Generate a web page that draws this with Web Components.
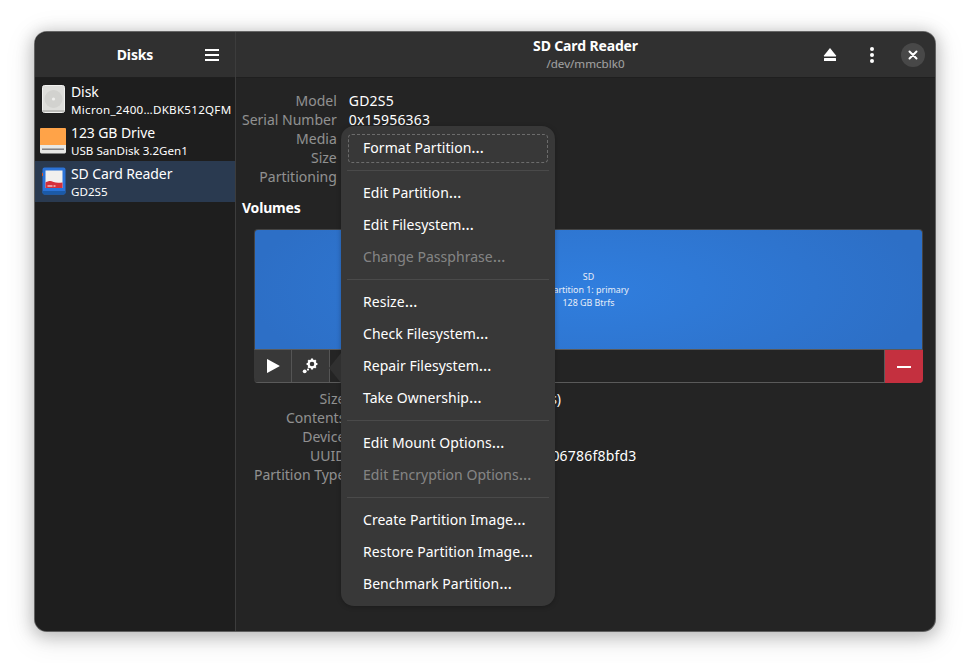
<!DOCTYPE html>
<html>
<head>
<meta charset="utf-8">
<title>Disks</title>
<style>
  html, body { margin: 0; background: #fff; }
  body { padding: 32px 35px; font-family: "Noto Sans", sans-serif; font-size: 14px; color: #fff; }
</style>
</head>
<body>
<disks-window>
  <disks-sidebar slot="sidebar">
    <drive-row name="Disk" detail="Micron_2400…DKBK512QFM" icon="disk" style="--detail-spacing: .27px"></drive-row>
    <drive-row name="123 GB Drive" detail="USB SanDisk 3.2Gen1" icon="usb"></drive-row>
    <drive-row name="SD Card Reader" detail="GD2S5" icon="sd" selected></drive-row>
  </disks-sidebar>
  <disks-header slot="header"></disks-header>
  <drive-details slot="main"></drive-details>
</disks-window>

<script>
const ICONS = {
  menu: `<svg width="16" height="16" viewBox="0 0 16 16" fill="#fff"><rect x="1" y="2" width="14" height="2"/><rect x="1" y="7" width="14" height="2"/><rect x="1" y="12" width="14" height="2"/></svg>`,
  eject: `<svg width="16" height="16" viewBox="0 0 16 16" fill="#fff"><path d="M8 1 14 8.500V9.500H2V8.500z"/><rect x="2" y="11" width="12" height="3" rx=".5"/></svg>`,
  kebab: `<svg width="16" height="16" viewBox="0 0 16 16" fill="#fff"><circle cx="8" cy="2" r="2"/><circle cx="8" cy="8" r="2"/><circle cx="8" cy="14" r="2"/></svg>`,
  close: `<svg width="12" height="12" viewBox="0 0 12 12" stroke="#fff" stroke-width="2" stroke-linecap="round"><path d="M2.500 2.500l7 7M9.500 2.500l-7 7"/></svg>`,
  play: `<svg width="16" height="16" viewBox="0 0 16 16" fill="#fff"><path d="M2 1.500v13a.4.4 0 0 0 .6.3L14.500 8.300a.4.4 0 0 0 0-.6L2.600 1.200a.4.4 0 0 0-.6.3z"/></svg>`,
  gear: `<svg width="17" height="16" viewBox="0 0 17 16"><g fill="none" stroke="#fff"><circle cx="10" cy="6" r="3.400" stroke-width="2.200"/><path stroke-width="2.100" d="M10 .6v2M10 9.400v2M4.600 6h2M13.400 6h2M6.200 2.200l1.400 1.400M12.400 8.400l1.400 1.400M13.800 2.200l-1.400 1.400M7.600 8.400 6.200 9.800"/></g><circle cx="2.700" cy="13.300" r="1.900" fill="#fff"/><circle cx="6" cy="11.600" r="1.100" fill="#fff"/></svg>`,
  minus: `<svg width="14" height="14" viewBox="0 0 14 14" fill="#fff"><rect y="6" width="14" height="2"/></svg>`,
  disk: `<svg width="24" height="28" viewBox="0 0 24 28"><rect x=".5" y=".5" width="22" height="27" rx="2" fill="#dededb"/><rect x=".5" y=".5" width="22" height="27" rx="2" fill="none" stroke="#f1f1ef"/><circle cx="11.500" cy="14" r="9" fill="#d2d2cf"/><circle cx="11.500" cy="14" r="1.600" fill="#efefed"/><path d="M1 26h21" stroke="#9a9a97"/></svg>`,
  usb: `<svg width="27" height="27" viewBox="0 0 27 27"><path d="M0 2a1 1 0 0 1 1-1h24a1 1 0 0 1 1 1v17H0z" fill="#ffa348"/><path d="M0 18h26v7a1.400 1.400 0 0 1-1.400 1.400H1.400A1.400 1.400 0 0 1 0 25z" fill="#e8e8e5"/><rect x="2" y="21.500" width="22" height="1.400" fill="#77767b"/></svg>`,
  sd: `<svg width="24" height="28" viewBox="0 0 24 28"><path d="M2.500.5h19a2 2 0 0 1 2 2v23a2 2 0 0 1-2 2h-19a2 2 0 0 1-2-2V9L0 8V6l.5-1V2.500a2 2 0 0 1 2-2z" fill="#2b73d8"/><path d="M.5 24h23v1.500a2 2 0 0 1-2 2h-19a2 2 0 0 1-2-2z" fill="#1b5aa8"/><rect x="3.500" y="3.500" width="17" height="17.500" fill="#f2f0ee"/><path d="M3.500 15.500c3-1.500 5-2 8-.5 3 1 6 .7 9 .4V21h-17z" fill="#d6303a"/><rect x="5.500" y="18.500" width="5" height="1" fill="#fff"/><rect x="11.500" y="18.500" width="2" height="1" fill="#fff"/><rect x="0" y="6" width="1" height="3" fill="#d6531f"/></svg>`
};

class DisksWindow extends HTMLElement {
  constructor() {
    super();
    this.attachShadow({ mode: 'open' });
    this.shadowRoot.innerHTML = `
      <style>
        :host {
          display: grid;
          grid-template-columns: 201px 1fr;
          grid-template-rows: 46px 553px;
          width: 900px;
          box-sizing: border-box;
          border-radius: 12px;
          background: #242424;
          overflow: hidden;
          box-shadow: 0 0 0 1px rgba(60,60,60,.75), 0 3px 16px 3px rgba(0,0,0,.22), 0 6px 28px 6px rgba(0,0,0,.08);
        }
        .side { grid-row: 1 / 3; border-right: 1px solid #3c3c3c; min-width: 0; }
      </style>
      <div class="side"><slot name="sidebar"></slot></div>
      <slot name="header"></slot>
      <slot name="main"></slot>
    `;
  }
}

class DisksSidebar extends HTMLElement {
  constructor() {
    super();
    this.attachShadow({ mode: 'open' });
    this.shadowRoot.innerHTML = `
      <style>
        :host { display: flex; flex-direction: column; height: 100%; background: #1e1e1e; }
        header {
          height: 46px; box-sizing: border-box; flex: none;
          background: #303030; border-bottom: 1px solid #1f1f1f;
          display: grid; grid-template-columns: 1fr auto 1fr; align-items: center;
          padding-right: 15px; padding-left: 15px;
        }
        h1 { margin: 0; font-size: 14px; font-weight: 700; grid-column: 2; letter-spacing: -.12px; }
        .menu { display: flex; justify-self: end; }
        .rows { padding-top: 1px; }
      </style>
      <header><h1>Disks</h1><span class="menu">${ICONS.menu}</span></header>
      <div class="rows"><slot></slot></div>
    `;
  }
}

class DriveRow extends HTMLElement {
  constructor() {
    super();
    this.attachShadow({ mode: 'open' });
  }
  connectedCallback() {
    this.shadowRoot.innerHTML = `
      <style>
        :host {
          display: flex; align-items: center; height: 41px; box-sizing: border-box;
          padding-left: 5px;
        }
        :host([selected]) { background: #2a3a50; }
        .icon { width: 27px; display: flex; justify-content: center; margin-right: 4px; flex: none; margin-top: -1px; }
        .name { font-size: 14px; line-height: 19px; letter-spacing: -.1px; }
        .detail { font-size: 11.6px; line-height: 17px; white-space: nowrap; letter-spacing: var(--detail-spacing, 0); }
      </style>
      <span class="icon">${ICONS[this.getAttribute('icon')]}</span>
      <div>
        <div class="name">${this.getAttribute('name')}</div>
        <div class="detail">${this.getAttribute('detail')}</div>
      </div>
    `;
  }
}

class DisksHeader extends HTMLElement {
  constructor() {
    super();
    this.attachShadow({ mode: 'open' });
    this.shadowRoot.innerHTML = `
      <style>
        :host {
          display: flex; align-items: center; justify-content: flex-end; position: relative;
          box-sizing: border-box; height: 46px; background: #303030; border-bottom: 1px solid #1f1f1f;
          padding-right: 10px;
        }
        .title { position: absolute; left: 0; right: 0; text-align: center; }
        .title b { display: block; font-size: 14px; line-height: 18px; letter-spacing: -.14px; }
        .title span { display: block; font-size: 11.6px; line-height: 17px; opacity: .55; }
        .btn { display: flex; position: relative; }
        .eject { margin-right: 26px; }
        .kebab { margin-right: 21px; }
        .close { width: 24px; height: 24px; border-radius: 50%; background: #484848; display: flex; align-items: center; justify-content: center; }
      </style>
      <div class="title"><b>SD Card Reader</b><span>/dev/mmcblk0</span></div>
      <span class="btn eject">${ICONS.eject}</span>
      <span class="btn kebab">${ICONS.kebab}</span>
      <span class="btn close">${ICONS.close}</span>
    `;
  }
}

class InfoGrid extends HTMLElement {
  constructor() {
    super();
    this.attachShadow({ mode: 'open' });
  }
  connectedCallback() {
    const rows = JSON.parse(this.getAttribute('rows'));
    this.shadowRoot.innerHTML = `
      <style>
        :host {
          display: grid; grid-template-columns: max-content 1fr; column-gap: 12px;
          line-height: 19px; font-size: 14px;
        }
        .k { text-align: right; color: rgba(255,255,255,.5); }
        .v { letter-spacing: .2px; white-space: nowrap; }
        .v.tight { letter-spacing: -.05px; }
      </style>
      ${rows.map(([k, v, cls]) => `<div class="k">${k}</div><div class="v ${cls || ''}">${v}</div>`).join('')}
    `;
  }
}

class VolumeMap extends HTMLElement {
  constructor() {
    super();
    this.attachShadow({ mode: 'open' });
    this.shadowRoot.innerHTML = `
      <style>
        :host { display: block; }
        .map {
          height: 121px; box-sizing: border-box; border: 1px solid #444; border-bottom: 1px solid #5a5a5a; border-radius: 4px 4px 0 0;
          background: radial-gradient(ellipse 340px 120px at center, #307ede, #2d6fc6);
          display: flex; align-items: center; justify-content: center; text-align: center;
          font-size: 8.9px; line-height: 13px; color: #e8eef8; padding-bottom: 1px;
        }
        .bar {
          display: flex; height: 33px; box-sizing: border-box;
          border-bottom: 1px solid #5a5a5a; border-radius: 0 0 4px 4px;
        }
        .tool {
          width: 37px; flex: none; background: #383838; border-right: 1px solid #555;
          display: flex; align-items: center; justify-content: center;
        }
        .tool:first-child { border-bottom-left-radius: 4px; }
        .space { flex: 1; border-right: 1px solid #5a5a5a; }
        .del {
          width: 38px; flex: none; background: #c4303f; margin-bottom: -1px; border-bottom-right-radius: 4px;
          display: flex; align-items: center; justify-content: center;
        }
      </style>
      <div class="map"><div>SD<br>Partition 1: primary<br>128 GB Btrfs</div></div>
      <div class="bar">
        <span class="tool">${ICONS.play}</span>
        <span class="tool">${ICONS.gear}</span>
        <span class="space"></span>
        <span class="del">${ICONS.minus}</span>
      </div>
    `;
  }
}

class MenuItem extends HTMLElement {
  constructor() {
    super();
    this.attachShadow({ mode: 'open' });
    this.shadowRoot.innerHTML = `
      <style>
        :host {
          display: block; height: 32px; line-height: 31px; box-sizing: border-box;
          padding: 0 15px; border-radius: 6px; position: relative; white-space: nowrap;
          letter-spacing: .04px;
        }
        :host([disabled]) { color: rgba(255,255,255,.4); }
        :host([focused])::after {
          content: ""; position: absolute; inset: 2px 0 1px 0;
          border: 1px dashed #6c6c6c; border-radius: 4px;
        }
        ::slotted(span) { font-size: 16px; line-height: 0; }
      </style>
      <slot></slot>
    `;
  }
}

class PartitionMenu extends HTMLElement {
  constructor() {
    super();
    this.attachShadow({ mode: 'open' });
    this.shadowRoot.innerHTML = `
      <style>
        :host {
          display: block; position: absolute; left: 105px; top: 48px; width: 214px;
          box-sizing: border-box; padding: 6px 7px;
          background: #383838; border-radius: 13px;
          box-shadow: 0 1px 5px rgba(0,0,0,.25);
        }
        .arrow {
          position: absolute; left: -12px; top: 227px; width: 0; height: 0;
          border-style: solid; border-width: 15px 12px 15px 0;
          border-color: transparent #303030 transparent transparent;
        }
        ::slotted(hr) { border: 0; height: 1px; background: #4a4a4a; margin: 6px -1px; }
      </style>
      <div class="arrow"></div>
      <slot></slot>
    `;
  }
}

class DriveDetails extends HTMLElement {
  constructor() {
    super();
    this.attachShadow({ mode: 'open' });
    const driveRows = [['Model', 'GD2S5'], ['Serial Number', '0x15956363'], ['Media', ''], ['Size', ''], ['Partitioning', '']];
    const volumeRows = [
      ['Size', '128 GB (128,035,676,160 bytes)', 'tight'], ['Contents', ''], ['Device', ''],
      ['UUID', '82a8d4b1-5d37-4b60-9b12-906786f8bfd3'], ['Partition Type', '']
    ];
    const menu = [
      ['Format Partition', 'focused'], null,
      ['Edit Partition'], ['Edit Filesystem'], ['Change Passphrase', 'disabled'], null,
      ['Resize'], ['Check Filesystem'], ['Repair Filesystem'], ['Take Ownership'], null,
      ['Edit Mount Options'], ['Edit Encryption Options', 'disabled'], null,
      ['Create Partition Image'], ['Restore Partition Image'], ['Benchmark Partition']
    ];
    this.shadowRoot.innerHTML = `
      <style>
        :host { display: block; position: relative; padding: 13px 12px 0 6px; height: 100%; box-sizing: border-box; }
        h2 { margin: 12px 0 11px; font-size: 14px; line-height: 20px; font-weight: 700; letter-spacing: -.2px; }
        .volumes { margin-left: 12px; }
        .volume-info { margin: 6px 0 0 12px; }
      </style>
      <info-grid rows='${JSON.stringify(driveRows)}'></info-grid>
      <h2>Volumes</h2>
      <volume-map class="volumes"></volume-map>
      <info-grid class="volume-info" rows='${JSON.stringify(volumeRows)}'></info-grid>
      <partition-menu>
        ${menu.map(m => m ? `<menu-item ${m[1] || ''}>${m[0]}<span>…</span></menu-item>` : '<hr>').join('')}
      </partition-menu>
    `;
  }
}

customElements.define('disks-window', DisksWindow);
customElements.define('disks-sidebar', DisksSidebar);
customElements.define('drive-row', DriveRow);
customElements.define('disks-header', DisksHeader);
customElements.define('info-grid', InfoGrid);
customElements.define('volume-map', VolumeMap);
customElements.define('menu-item', MenuItem);
customElements.define('partition-menu', PartitionMenu);
customElements.define('drive-details', DriveDetails);
</script>
</body>
</html>
